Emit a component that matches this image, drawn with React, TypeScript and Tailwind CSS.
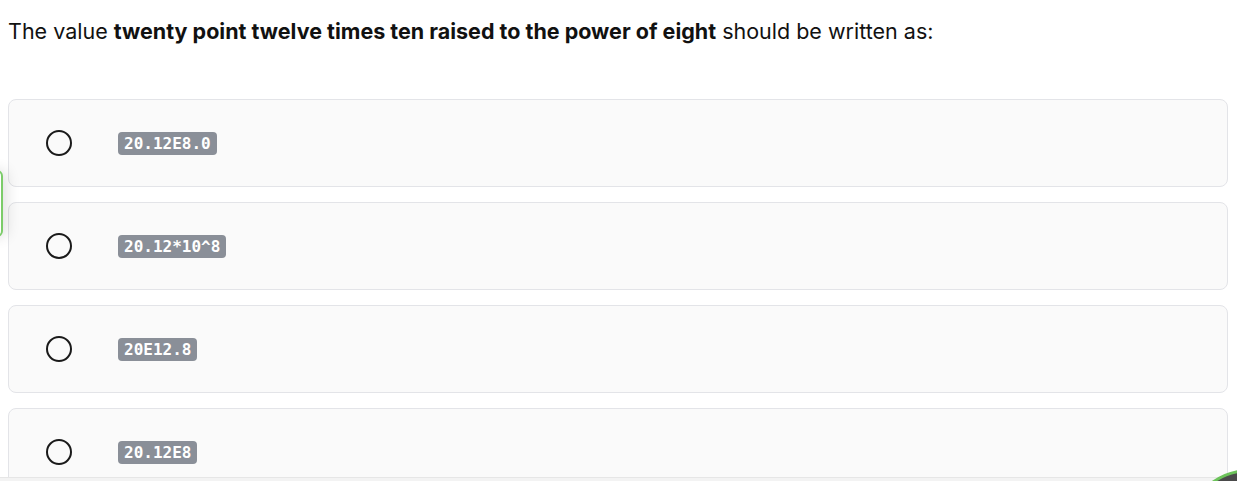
import { useState } from 'react';

const options = ['20.12E8.0', '20.12*10^8', '20E12.8', '20.12E8'];

export default function App() {
  const [picked, setPicked] = useState<number | null>(null);

  return (
    <div className="relative h-[481px] w-[1237px] overflow-hidden bg-white font-['Inter',sans-serif] text-black">
      <div className="px-2 pt-[17px]">
        <p className="text-[21.5px] leading-[28px] text-[#111]">
          The value <b className="font-bold">twenty point twelve times ten raised to the power of eight</b> should be written as:
        </p>

        <div className="mt-[54px] flex flex-col gap-[15px] pr-[1px]">
          {options.map((opt, i) => (
            <button
              key={opt}
              onClick={() => setPicked(i)}
              className="flex h-[88px] items-center rounded-lg border border-[#e3e4e8] bg-[#fafafa] text-left"
            >
              <span className="ml-[37px] flex h-[26px] w-[26px] items-center justify-center rounded-full border-[2.5px] border-[#1a1a1a]">
                {picked === i && <span className="h-3 w-3 rounded-full bg-[#1a1a1a]" />}
              </span>
              <code className="ml-[46px] rounded-[4px] bg-[#8a8f98] px-[6px] font-['DejaVu_Sans_Mono',monospace] text-[16px] leading-[23px] font-bold text-white">
                {opt}
              </code>
            </button>
          ))}
        </div>
      </div>

      {/* side tab peeking in from the left */}
      <div className="absolute top-[170px] left-[-40px] h-[67px] w-[43px] rounded-md border-2 border-[#7ccc6a] bg-white shadow-[4px_0_14px_rgba(0,0,0,0.12)]" />

      {/* bottom bar */}
      <div className="absolute right-0 bottom-0 left-0 h-[4px] border-t border-[#e6e6e6] bg-[#f3f3f3]" />

      {/* floating button */}
      <div className="absolute top-[469px] left-[1184px] h-[132px] w-[132px] rounded-full border-[3px] border-[#6cc35a] bg-[#4a4a4a]" />
    </div>
  );
}
